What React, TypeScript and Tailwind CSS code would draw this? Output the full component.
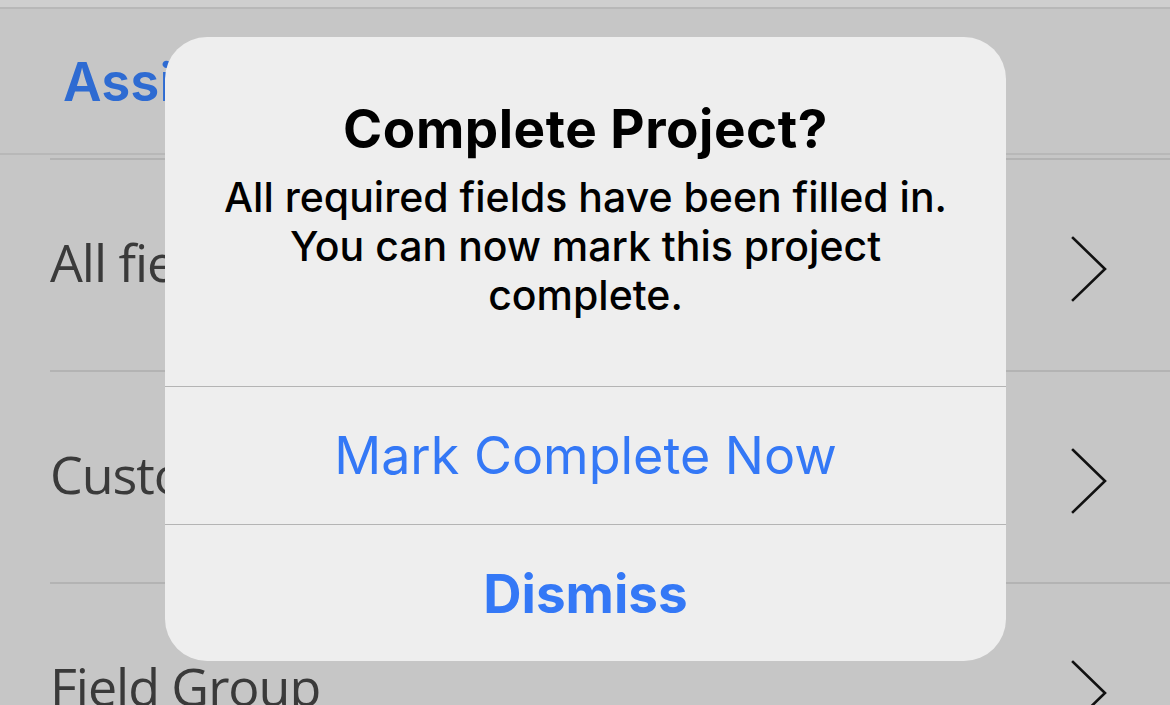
import { ReactNode } from "react";

const Chevron = () => (
  <svg width="36" height="66" viewBox="0 0 36 66" fill="none" className="mt-[8px] mr-[1px]">
    <polyline
      points="2,2 34,33 2,64"
      stroke="#111"
      strokeWidth="2.6"
      strokeLinecap="square"
      strokeLinejoin="miter"
    />
  </svg>
);

const Row = ({ children }: { children: ReactNode }) => (
  <div className="ml-[50px] h-[212px] border-b-2 border-[#b3b3b3] flex items-center justify-between pr-[62px]">
    <span className="text-[52px] text-[#3a3a3a] tracking-[-0.02em] font-['Open_Sans',sans-serif] whitespace-nowrap mt-[-6px]">
      {children}
    </span>
    <Chevron />
  </div>
);

const App = () => {
  return (
    <div className="relative w-[1170px] h-[705px] overflow-hidden bg-[#c6c6c6]">
      <div className="h-[9px] bg-[#cfcfcf] border-b-2 border-[#b8b8b8]" />
      <div className="h-[146px] border-b-2 border-[#b8b8b8] flex items-center pl-[63px] pt-[4px]">
        <span className="text-[53px] font-semibold text-[#2e6bd2] font-['Inter',sans-serif]">
          Assignment
        </span>
      </div>
      <div className="h-[3px]" />
      <div className="border-t-2 border-[#b3b3b3] ml-[50px]" />
      <Row>All fields</Row>
      <Row>Custom Fields</Row>
      <Row>Field Group</Row>

      {/* alert */}
      <div className="absolute left-[165px] top-[37px] w-[841px] h-[624px] rounded-[42px] bg-[#eeeeee] flex flex-col font-['Inter',sans-serif] text-center overflow-hidden">
        <div className="h-[349px] flex flex-col items-center pt-[61px] px-[30px]">
          <h2 className="text-[53px] leading-[62px] font-bold text-black tracking-[0.01em]">
            Complete Project?
          </h2>
          <p className="mt-[13px] text-[41px] leading-[49px] font-medium text-black">
            All required fields have been filled in.
            <br />
            You can now mark this project
            <br />
            complete.
          </p>
        </div>
        <div className="h-[138px] border-t-[1.5px] border-[#b4b4b4] flex items-center justify-center">
          <span className="text-[52px] text-[#3478f6]">Mark Complete Now</span>
        </div>
        <div className="flex-1 border-t-[1.5px] border-[#b4b4b4] flex items-center justify-center">
          <span className="text-[53px] font-bold text-[#3478f6] mt-[4px]">Dismiss</span>
        </div>
      </div>
    </div>
  );
};

export default App;
